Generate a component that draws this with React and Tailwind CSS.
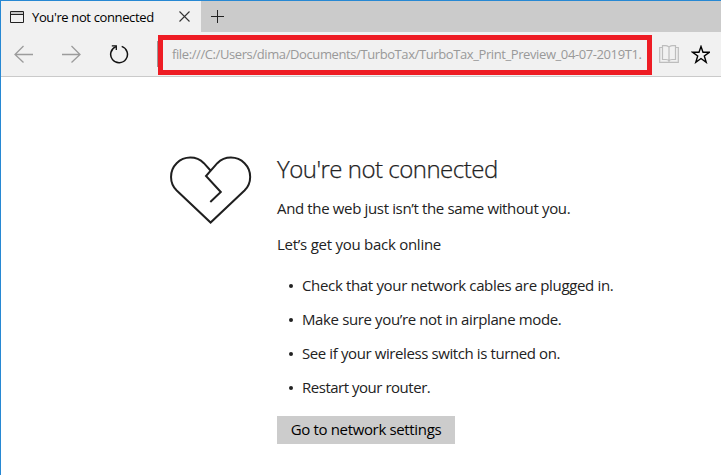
const tips = [
  { text: 'Check that your network cables are plugged in.', tracking: 'tracking-[-0.34px]' },
  { text: 'Make sure you’re not in airplane mode.', tracking: 'tracking-[-0.37px]' },
  { text: 'See if your wireless switch is turned on.', tracking: 'tracking-[-0.4px]' },
  { text: 'Restart your router.', tracking: 'tracking-[-0.48px]' },
];

const WindowIcon = () => (
  <svg className="h-3 w-[14px] shrink-0" viewBox="0 0 14 12" fill="none" stroke="#222">
    <path d="M0.5 0.5h13v11h-13z" />
    <path d="M1 2h12" stroke="#999" />
    <path d="M1 3.5h12" />
  </svg>
);

const CloseIcon = () => (
  <svg className="h-[11px] w-[11px] shrink-0" viewBox="0 0 11 11" fill="none" stroke="#333" strokeWidth="1.1">
    <path d="M0.5 0.5l10 10M10.5 0.5l-10 10" />
  </svg>
);

const PlusIcon = () => (
  <svg className="h-[13px] w-[13px]" viewBox="0 0 13 13" fill="none" stroke="#222">
    <path d="M0 6.5h13M6.5 0v13" />
  </svg>
);

const BackIcon = () => (
  <svg className="h-[18px] w-5" viewBox="0 0 20 18" fill="none" stroke="#9c9c9c" strokeWidth="1.3">
    <path d="M20 9.5H2M10.5 1L2 9.5L10.5 17.5" />
  </svg>
);

const ForwardIcon = () => (
  <svg className="h-[18px] w-5" viewBox="0 0 20 18" fill="none" stroke="#9c9c9c" strokeWidth="1.3">
    <path d="M1 9.5H19M10.5 1L19 9.5L10.5 17.5" />
  </svg>
);

const RefreshIcon = () => (
  <svg className="h-5 w-5" viewBox="0 0 20 20" fill="none" stroke="#111" strokeWidth="1.5">
    <path d="M12.7 2.4A8.4 8.4 0 1 1 6.9 2.6" />
    <path d="M2.8 1.8H7.3V6" strokeWidth="1.3" />
  </svg>
);

const BookIcon = () => (
  <svg className="h-[19px] w-5" viewBox="0 0 20 19" fill="none" stroke="#bdbdbd" strokeWidth="1.2">
    <path d="M10 2C8.5 1 7.5 0.7 6.5 0.7H3.5V14.5H7C8.5 14.5 9.5 15 10 16C10.5 15 11.5 14.5 13 14.5H16.5V0.7H13.5C12.5 0.7 11.5 1 10 2V17" />
    <path d="M3.5 2.5H0.7V17.3H19.3V2.5H16.5" />
  </svg>
);

const StarIcon = () => (
  <svg className="h-[19px] w-[19px]" viewBox="0 0 19 19" fill="none" stroke="#000" strokeWidth="1.4">
    <path d="M10 1.5L12 7.3H18.3L13.3 11L15.2 17.3L10 13.5L4.8 17.3L6.7 11L1.7 7.3H8Z" />
  </svg>
);

const BrokenHeart = () => (
  <svg className="h-[68px] w-[82px]" viewBox="170 156 82 68" fill="none" stroke="#1f1f1f" strokeWidth="2">
    <path d="M210.5 170.5L203.9 163.2A19 19 0 0 0 176.7 190.5L210.6 222.5L244.5 190.5A19 19 0 0 0 217.3 163.2L206 176L220.8 192L210.3 202" />
  </svg>
);

const App = () => {
  return (
    <div className="flex h-[475px] w-[721px] flex-col overflow-hidden border-t border-l border-[#2788d3] bg-white font-['Open_Sans','Noto_Sans',sans-serif] whitespace-nowrap text-[#222]">
      <div className="flex h-[31px] shrink-0 bg-[#cbcbcb]">
        <div className="flex w-[200px] items-center bg-[#f1f1f1] pr-[11px] pl-[9px]">
          <WindowIcon />
          <span className="ml-2 text-[13px] leading-[30px] tracking-[-0.37px] text-black">You're not connected</span>
          <span className="ml-auto">
            <CloseIcon />
          </span>
        </div>
        <button className="ml-[10px]" aria-label="New tab">
          <PlusIcon />
        </button>
      </div>

      <div className="flex h-[45px] shrink-0 items-center border-b border-[#cacaca] bg-[#f1f1f1] pl-3">
        <BackIcon />
        <span className="ml-7">
          <ForwardIcon />
        </span>
        <span className="ml-7">
          <RefreshIcon />
        </span>
        <div className="ml-7 h-[26px] w-px bg-[#999]" />
        <div className="mt-px h-10 w-[494px] shrink-0 border-[5px] border-[#ee1c24] pr-[5px] pl-[9px]">
          <div className="text-[13px] leading-[29px] tracking-[-0.4px] text-[#999]">
            file:///C:/Users/dima/Documents/TurboTax/TurboTax_Print_Preview_04-07-2019T1.
          </div>
        </div>
        <span className="ml-[7px]">
          <BookIcon />
        </span>
        <span className="ml-3">
          <StarIcon />
        </span>
      </div>

      <main className="flex pt-[79px] pl-[169px]">
        <BrokenHeart />
        <div className="-mt-0.5 ml-[25px] text-[15px] leading-5">
          <h1 className="-mt-px text-2xl leading-8 font-light tracking-[-0.5px] [-webkit-text-stroke:0.25px_#222]">
            You're not connected
          </h1>
          <p className="mt-[13px] tracking-[-0.35px]">And the web just isn’t the same without you.</p>
          <p className="mt-4 tracking-[-0.26px]">Let’s get you back online</p>
          <ul className="mt-[21px] space-y-[14px]">
            {tips.map((tip) => (
              <li key={tip.text} className="flex items-center">
                <span className="mt-0.5 mr-[9px] ml-3 h-1 w-1 rounded-full bg-[#222]" />
                <span className={tip.tracking}>{tip.text}</span>
              </li>
            ))}
          </ul>
          <button className="mt-[19px] h-7 w-[178px] bg-[#ccc] pb-0.5 tracking-[-0.35px] text-black">Go to network settings</button>
        </div>
      </main>
    </div>
  );
};

export default App;
